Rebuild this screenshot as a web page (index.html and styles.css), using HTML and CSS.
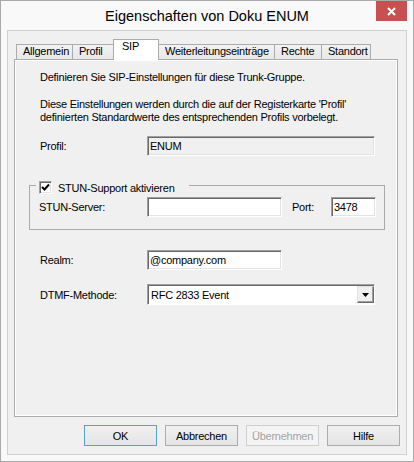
FILE: index.html
```html
<!DOCTYPE html>
<html lang="de">
<head>
    <meta charset="UTF-8">
    <meta name="viewport" content="width=device-width, initial-scale=1.0">
    <title>Eigenschaften von Doku ENUM</title>
    <link rel="stylesheet" href="styles.css">
</head>
<body>
    <div class="window">
        <div class="titlebar">
            <span></span>
            <span class="title">Eigenschaften von Doku ENUM</span>
            <button class="close" type="button" aria-label="Schließen">
                <svg width="31" height="20" viewBox="0 0 31 20">
                    <path d="M12 7 L19 14 M19 7 L12 14" stroke="#fff" stroke-width="2" fill="none"/>
                </svg>
            </button>
        </div>

        <div class="client">
            <div class="tabs">
                <div class="tab tab-allgemein">Allgemein</div>
                <div class="tab tab-profil">Profil</div>
                <div class="tab tab-sip active">SIP</div>
                <div class="tab tab-weiter">Weiterleitungseinträge</div>
                <div class="tab tab-rechte">Rechte</div>
                <div class="tab tab-standort">Standort</div>
            </div>

            <div class="panel">
                <p class="intro">Definieren Sie SIP-Einstellungen für diese Trunk-Gruppe.</p>
                <p class="note">Diese Einstellungen werden durch die auf der Registerkarte 'Profil'<br>definierten Standardwerte des entsprechenden Profils vorbelegt.</p>

                <div class="row row-profil">
                    <label for="profil">Profil:</label>
                    <input class="field field-wide field-readonly" id="profil" type="text" value="ENUM" readonly>
                </div>

                <div class="group">
                    <div class="group-title">
                        <span class="check">
                            <svg width="9" height="9" viewBox="0 0 9 9">
                                <path d="M1 4 L3.5 6.5 L8 1.5" stroke="#000" stroke-width="2" fill="none"/>
                            </svg>
                        </span>
                        <span>STUN-Support aktivieren</span>
                    </div>
                    <div class="row row-stun">
                        <label for="stun">STUN-Server:</label>
                        <input class="field field-mid" id="stun" type="text" value="">
                        <label class="port-label" for="port">Port:</label>
                        <input class="field field-port" id="port" type="text" value="3478">
                    </div>
                </div>

                <div class="row row-realm">
                    <label for="realm">Realm:</label>
                    <input class="field field-mid" id="realm" type="text" value="@company.com">
                </div>

                <div class="row row-dtmf">
                    <label>DTMF-Methode:</label>
                    <div class="combo">
                        <span class="combo-value">RFC 2833 Event</span>
                        <span class="combo-btn">
                            <svg width="7" height="4" viewBox="0 0 7 4">
                                <path d="M0 0 H7 L3.5 4 Z" fill="#000"/>
                            </svg>
                        </span>
                    </div>
                </div>
            </div>

            <div class="buttons">
                <button class="btn btn-default" type="button">OK</button>
                <button class="btn" type="button">Abbrechen</button>
                <button class="btn" type="button" disabled>Übernehmen</button>
                <button class="btn" type="button">Hilfe</button>
            </div>
        </div>
    </div>
</body>
</html>
```

FILE: styles.css
```css
* {
    box-sizing: border-box;
}
body {
    margin: 0;
    font-family: "Liberation Sans", Arial, sans-serif;
    font-size: 11px;
    letter-spacing: -0.25px;
    color: #000;
}
p {
    margin: 0;
    line-height: 13px;
}

/* window frame */
.window {
    width: 414px;
    height: 462px;
    border: 1px solid #aaaaaa;
    background: #f9f9f9;
    padding: 0 6px 6px 6px;
}
.titlebar {
    height: 29px;
    display: grid;
    grid-template-columns: 1fr auto 1fr;
}
.title {
    align-self: center;
    font-size: 14.5px;
    letter-spacing: 0;
    padding-top: 1px;
}
.close {
    justify-self: end;
    align-self: start;
    width: 31px;
    height: 20px;
    padding: 0;
    border: none;
    background: #c75050;
    display: block;
}
.close svg {
    display: block;
}

.client {
    height: 425px;
    border: 1px solid #d0d0d0;
    background: #f0f0f0;
    padding: 8px 6px 8px 6px;
}

/* tab strip */
.tabs {
    display: flex;
    align-items: flex-end;
    height: 20px;
    padding-left: 2px;
}
.tab {
    height: 15px;
    border: 1px solid #acacac;
    border-bottom: none;
    margin-left: -1px;
    padding-left: 6px;
    line-height: 13px;
    background: linear-gradient(#f2f2f2, #e8e8e8);
    white-space: nowrap;
}
.tab:first-child {
    margin-left: 0;
}
.tab.active {
    height: 21px;
    margin-bottom: -1px;
    padding-left: 8px;
    background: #fff;
    position: relative;
}
.tab-allgemein { width: 57px; }
.tab-profil { width: 42px; }
.tab-sip { width: 46px; }
.tab-weiter { width: 117px; }
.tab-rechte { width: 48px; }
.tab-standort { width: 50px; }

.panel {
    width: 384px;
    height: 358px;
    border: 1px solid #acacac;
    box-shadow: inset 0 0 0 1px #fff;
    background: #f0f0f0;
    padding: 11px 0 0 25px;
}
.note {
    margin-top: 14px;
}

/* form rows */
.row {
    display: flex;
    align-items: center;
}
.row label {
    width: 107px;
}
.row-profil {
    margin-top: 12px;
}
.row-realm {
    margin-top: 20px;
}
.row-dtmf {
    margin-top: 14px;
}

.field {
    height: 20px;
    font: inherit;
    letter-spacing: inherit;
    color: #000;
    padding: 0 2px;
    border: 1px solid;
    border-color: #a0a0a0 #fff #fff #a0a0a0;
    box-shadow: inset 1px 1px 0 #696969, inset -1px -1px 0 #e3e3e3;
    background: #fff;
    outline: none;
}
.field-readonly {
    background: #f0f0f0;
}
.field-wide {
    width: 228px;
}
.field-mid {
    width: 135px;
}
.field-port {
    width: 45px;
}

/* STUN group box */
.group {
    width: 356px;
    margin: 29px 0 0 -11px;
    border: 1px solid #a9a9a9;
    padding: 0 0 12px 9px;
}
.group-title {
    display: flex;
    align-items: center;
    gap: 6px;
    width: fit-content;
    height: 13px;
    margin: -5px 0 0 -3px;
    padding: 0 14px 0 3px;
    background: #f0f0f0;
}
.check {
    width: 13px;
    height: 13px;
    border: 1px solid;
    border-color: #a0a0a0 #fff #fff #a0a0a0;
    box-shadow: inset 1px 1px 0 #696969, inset -1px -1px 0 #e3e3e3;
    background: #fff;
    display: flex;
    align-items: center;
    justify-content: center;
}
.check svg {
    display: block;
}
.row-stun {
    margin-top: 3px;
}
.row-stun label {
    width: 108px;
}
.row-stun .port-label {
    width: 39px;
    margin-left: 10px;
}

/* dropdown */
.combo {
    width: 228px;
    height: 21px;
    display: flex;
    border: 1px solid;
    border-color: #a0a0a0 #fff #fff #a0a0a0;
    box-shadow: inset 1px 1px 0 #696969;
    background: #fff;
    padding: 1px 0 1px 1px;
}
.combo-value {
    flex: 1;
    align-self: center;
    padding-left: 2px;
}
.combo-btn {
    width: 17px;
    display: flex;
    align-items: center;
    justify-content: center;
    background: #f0f0f0;
    border: 1px solid;
    border-color: #e3e3e3 #696969 #696969 #e3e3e3;
    box-shadow: inset -1px -1px 0 #a0a0a0;
}
.combo-btn svg {
    display: block;
}

/* dialog buttons */
.buttons {
    display: flex;
    justify-content: flex-end;
    gap: 8px;
    margin-top: 8px;
}
.btn {
    width: 73px;
    height: 21px;
    padding: 0;
    font: inherit;
    letter-spacing: inherit;
    color: #000;
    border: 1px solid #acacac;
    background: linear-gradient(#f0f0f0, #e5e5e5);
}
.btn-default {
    border-color: #569de5;
}
.btn:disabled {
    color: #a3a3a3;
    border-color: #cfcfcf;
    background: #f4f4f4;
}
```
